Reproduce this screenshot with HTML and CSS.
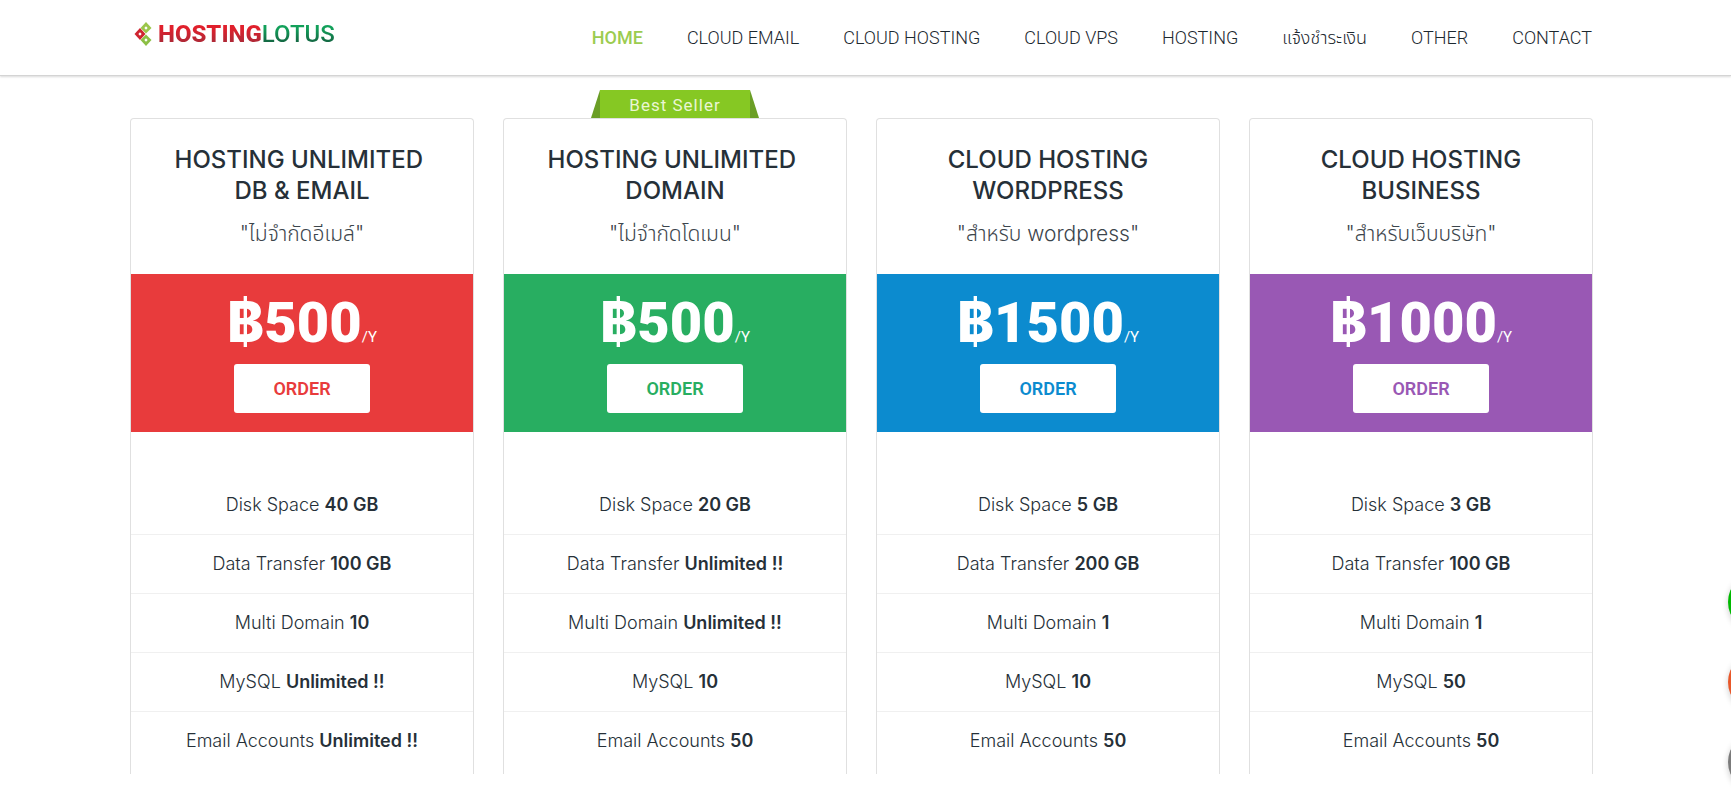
FILE: index.html
```html
<!DOCTYPE html>
<html lang="th">
<head>
<meta charset="utf-8">
<meta name="viewport" content="width=device-width, initial-scale=1">
<title>HostingLotus</title>
<link rel="stylesheet" href="styles.css">
</head>
<body>
<header class="header">
  <a class="logo" href="#" aria-label="HostingLotus">
    <svg class="logo-mark" viewBox="0 0 18 26" aria-hidden="true">
      <path fill="#9bc64b" d="M12 1l5.500 6-5.500 5.500-5.500-5.500z"/>
      <path fill="#8cbf45" d="M12 13.500l5.500 5.500-5.500 6-5.500-6z"/>
      <path fill="#cf2430" d="M6 7l5.500 6-5.500 6-5.500-6z"/>
      <path fill="#fff" d="M12 5.300l1.700 1.700-1.700 1.700-1.700-1.700zM12 17.300l1.700 1.700-1.700 1.700-1.700-1.700zM6 11.300l1.700 1.700-1.700 1.700-1.700-1.700z"/>
    </svg>
    <span class="logo-text"><span class="logo-hosting">HOSTING</span><span class="logo-lotus">LOTUS</span></span>
  </a>
  <nav class="nav">
    <a class="nav-link active" href="#">HOME</a>
    <a class="nav-link" href="#">CLOUD EMAIL</a>
    <a class="nav-link" href="#">CLOUD HOSTING</a>
    <a class="nav-link" href="#">CLOUD VPS</a>
    <a class="nav-link" href="#">HOSTING</a>
    <a class="nav-link" href="#">แจ้งชำระเงิน</a>
    <a class="nav-link" href="#">OTHER</a>
    <a class="nav-link" href="#">CONTACT</a>
  </nav>
</header>
<main class="plans">
  <article class="card red">
    <h2 class="title">HOSTING UNLIMITED&nbsp;<br>DB &amp; EMAIL</h2>
    <p class="subtitle">"ไม่จำกัดอีเมล์"</p>
    <div class="band">
      <p class="price"><span class="baht">฿</span>500<span class="per">/Y</span></p>
      <button class="order" type="button">ORDER</button>
    </div>
    <ul class="features">
      <li>Disk Space <b>40 GB</b></li>
      <li>Data Transfer <b>100 GB</b></li>
      <li>Multi Domain <b>10</b></li>
      <li>MySQL <b>Unlimited !!</b></li>
      <li>Email Accounts <b>Unlimited !!</b></li>
    </ul>
  </article>
  <article class="card green">
    <span class="ribbon">Best Seller</span>
    <h2 class="title">HOSTING UNLIMITED&nbsp;<br>DOMAIN</h2>
    <p class="subtitle">"ไม่จำกัดโดเมน"</p>
    <div class="band">
      <p class="price"><span class="baht">฿</span>500<span class="per">/Y</span></p>
      <button class="order" type="button">ORDER</button>
    </div>
    <ul class="features">
      <li>Disk Space <b>20 GB</b></li>
      <li>Data Transfer <b>Unlimited !!</b></li>
      <li>Multi Domain <b>Unlimited !!</b></li>
      <li>MySQL <b>10</b></li>
      <li>Email Accounts <b>50</b></li>
    </ul>
  </article>
  <article class="card blue">
    <h2 class="title">CLOUD HOSTING<br>WORDPRESS</h2>
    <p class="subtitle">"สำหรับ wordpress"</p>
    <div class="band">
      <p class="price"><span class="baht">฿</span>1500<span class="per">/Y</span></p>
      <button class="order" type="button">ORDER</button>
    </div>
    <ul class="features">
      <li>Disk Space <b>5 GB</b></li>
      <li>Data Transfer <b>200 GB</b></li>
      <li>Multi Domain <b>1</b></li>
      <li>MySQL <b>10</b></li>
      <li>Email Accounts <b>50</b></li>
    </ul>
  </article>
  <article class="card purple">
    <h2 class="title">CLOUD HOSTING<br>BUSINESS</h2>
    <p class="subtitle">"สำหรับเว็บบริษัท"</p>
    <div class="band">
      <p class="price"><span class="baht">฿</span>1000<span class="per">/Y</span></p>
      <button class="order" type="button">ORDER</button>
    </div>
    <ul class="features">
      <li>Disk Space <b>3 GB</b></li>
      <li>Data Transfer <b>100 GB</b></li>
      <li>Multi Domain <b>1</b></li>
      <li>MySQL <b>50</b></li>
      <li>Email Accounts <b>50</b></li>
    </ul>
  </article>
</main>
<div class="contact-tabs">
  <button class="tab tab-line" type="button" aria-label="Line"></button>
  <button class="tab tab-phone" type="button" aria-label="Phone"></button>
  <button class="tab tab-mail" type="button" aria-label="Email"></button>
</div>
</body>
</html>
```
FILE: styles.css
```css
* {
  box-sizing: border-box;
}

body {
  margin: 0;
  overflow-x: hidden;
  background: #fff;
  color: #263038;
  font-family: Roboto, "Noto Sans Thai", "Noto Sans", sans-serif;
}

.header {
  display: flex;
  align-items: center;
  justify-content: space-between;
  height: 76px;
  padding: 0 139px 0 134px;
  border-bottom: 1px solid #d4d4d4;
  box-shadow: 0 1px 2px rgba(0, 0, 0, 0.15);
}

.logo {
  display: flex;
  align-items: center;
  gap: 6px;
  padding-bottom: 8px;
  text-decoration: none;
}

.logo-mark {
  width: 18px;
  height: 26px;
}

.logo-text {
  font-size: 24px;
  line-height: 28px;
}

.logo-hosting,
.logo-lotus {
  background-clip: text;
  -webkit-background-clip: text;
  color: transparent;
}

.logo-hosting {
  background-image: linear-gradient(#e0202c 30%, #a82a38 85%);
  font-weight: 800;
}

.logo-lotus {
  background-image: linear-gradient(#12a05a 30%, #146040 85%);
  font-weight: 500;
}

.nav {
  display: flex;
  gap: 44px;
}

.nav-link {
  color: #1c282f;
  font-size: 18px;
  font-weight: 300;
  line-height: 24px;
  text-decoration: none;
  white-space: nowrap;
}

.nav-link.active {
  color: #9ccc50;
  font-weight: 500;
}

.plans {
  display: grid;
  grid-template-columns: repeat(4, 1fr);
  gap: 29px;
  padding: 42px 138px 32px 130px;
}

.card {
  position: relative;
  border: 1px solid #e0e0e0;
  border-bottom: 0;
  border-radius: 4px 4px 0 0;
  text-align: center;
}

.ribbon {
  position: absolute;
  bottom: 100%;
  left: 50%;
  width: 168px;
  height: 28px;
  margin-bottom: 1px;
  transform: translateX(-50%);
  clip-path: polygon(9px 0, 159px 0, 100% 100%, 0 100%);
  background: linear-gradient(90deg, #6b9e26 9px, #86c823 9px 159px, #6b9e26 159px);
  color: #eaf6d4;
  font-size: 17px;
  letter-spacing: 1px;
  line-height: 30px;
}

.title {
  margin: 0;
  padding-top: 25px;
  font-family: Inter, "Noto Sans", sans-serif;
  font-size: 24px;
  font-weight: 500;
  line-height: 31px;
}

.subtitle {
  margin: 0;
  padding: 12px 0 25px;
  color: #3c454c;
  font-family: Inter, "Noto Sans Thai", sans-serif;
  font-size: 21px;
  font-weight: 300;
  line-height: 31px;
}

.band {
  height: 158px;
  padding-top: 18px;
  background: var(--plan);
}

.price {
  height: 60px;
  margin: 0;
  color: #fff;
  font-size: 56px;
  font-weight: 900;
  line-height: 60px;
}

.baht {
  font-family: Inter, "Open Sans", sans-serif;
  font-weight: 800;
}

.per {
  font-size: 15px;
  font-weight: 400;
}

.order {
  width: 136px;
  height: 49px;
  margin-top: 12px;
  border: 0;
  border-radius: 3px;
  background: #fff;
  color: var(--plan);
  font-family: Roboto, sans-serif;
  font-size: 18px;
  font-weight: 600;
}

.red {
  --plan: #e83b3c;
}

.green {
  --plan: #28ae61;
}

.blue {
  --plan: #0c8bcf;
}

.purple {
  --plan: #9958b4;
}

.features {
  margin: 0;
  padding: 44px 0 4px;
  list-style: none;
  font-family: Inter, "Noto Sans", sans-serif;
  font-size: 18px;
  font-weight: 300;
  line-height: 58px;
}

.features li {
  border-bottom: 1px solid #f0f0f0;
}

.features li:last-child {
  border-bottom: 0;
}

.features b {
  font-weight: 600;
}

.contact-tabs {
  position: fixed;
  top: 572px;
  right: -57px;
  display: grid;
  gap: 20px;
}

.tab {
  width: 60px;
  height: 60px;
  border: 0;
  border-radius: 50%;
  box-shadow: 0 2px 6px rgba(0, 0, 0, 0.2);
}

.tab-line {
  background: #00b900;
}

.tab-phone {
  background: #e8582a;
}

.tab-mail {
  background: #7b7b7b;
}
```
